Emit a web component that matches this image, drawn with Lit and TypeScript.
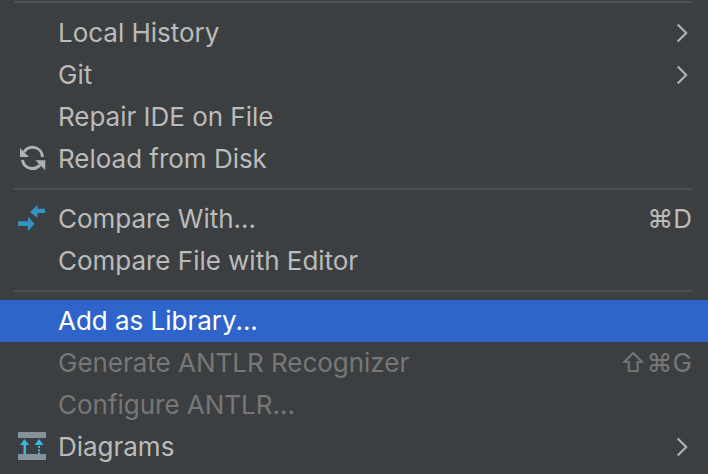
import {LitElement, css, html, svg} from 'lit';
import {customElement} from 'lit/decorators.js';

type Item = {
  label: string;
  icon?: 'reload' | 'compare' | 'diagrams';
  shortcut?: string;
  submenu?: boolean;
  disabled?: boolean;
  selected?: boolean;
};

const groups: Item[][] = [
  [
    {label: 'Local History', submenu: true},
    {label: 'Git', submenu: true},
    {label: 'Repair IDE on File'},
    {label: 'Reload from Disk', icon: 'reload'},
  ],
  [
    {label: 'Compare With...', icon: 'compare', shortcut: '⌘D'},
    {label: 'Compare File with Editor'},
  ],
  [
    {label: 'Add as Library...', selected: true},
    {label: 'Generate ANTLR Recognizer', disabled: true, shortcut: '⇧⌘G'},
    {label: 'Configure ANTLR...', disabled: true},
    {label: 'Diagrams', icon: 'diagrams', submenu: true},
  ],
];

const icons = {
  reload: svg`
    <path d="M24.500 13A10 10 0 0 0 6 8M4.500 16A10 10 0 0 0 22 21" fill="none" stroke="#afb1b3" stroke-width="3"/>
    <path d="M2 4v9h9zM17.300 16.300h10v10z" fill="#afb1b3"/>`,
  compare: svg`
    <path d="M19.500 .7V14L12 8zM19.500 4.700H27V9H19.500z" fill="#3592c4"/>
    <path d="M10 12.700V27.300L16.500 19.700zM0 17.300H10V22H0z" fill="#3592c4"/>`,
  diagrams: svg`
    <path d="M0 0h28v6H0zM0 22h28v6H0z" fill="#87939a"/>
    <path d="M6.500 7l4.500 6H8v9H5.500v-9H2zM21 7l4.500 6H16.500z" fill="#3db7e0"/>
    <path d="M20 14h2v2h-2zM20 17.500h2v2h-2zM20 20.500h2v1.500h-2z" fill="#3db7e0"/>`,
};

@customElement('app-root')
export class AppRoot extends LitElement {
  static styles = css`
    :host {
      display: block;
      height: 474px;
      overflow: hidden;
      background: #3c3f41;
      font-family: Inter, 'Noto Sans', sans-serif;
      font-size: 26px;
      letter-spacing: -0.02px;
      color: #bbbbbb;
    }

    .sep {
      height: 2px;
      margin: 8px 16px 8px 14px;
      background: #51504f;
    }

    .sep.top {
      margin-top: 1px;
      margin-bottom: 9px;
    }

    .row {
      display: flex;
      align-items: center;
      height: 42px;
      padding: 0 16px 0 14px;
      white-space: nowrap;
    }

    .row.selected {
      background: #2f65ca;
      color: #ffffff;
    }

    .row.disabled {
      color: #777777;
    }

    .icon {
      flex: none;
      width: 28px;
      height: 28px;
      margin: 0 12px 2px 4px;
      overflow: visible;
    }

    .icon-blank {
      flex: none;
      width: 44px;
    }

    .label {
      flex: 1;
      margin-top: -1px;
    }

    .shortcut {
      font-family: Inter, 'DejaVu Sans', sans-serif;
      font-size: 26px;
      margin-top: -1px;
    }

    .chevron {
      flex: none;
      width: 12px;
      height: 20px;
      margin-right: 4px;
    }
  `;

  private renderRow(item: Item) {
    const cls = `row${item.selected ? ' selected' : ''}${item.disabled ? ' disabled' : ''}`;
    return html`
      <div class=${cls}>
        ${item.icon
          ? html`<svg class="icon" viewBox="0 0 28 28">${icons[item.icon]}</svg>`
          : html`<span class="icon-blank"></span>`}
        <span class="label">${item.label}</span>
        ${item.shortcut ? html`<span class="shortcut">${item.shortcut}</span>` : ''}
        ${item.submenu
          ? html`<svg class="chevron" viewBox="0 0 12 20">
              <path d="M1.700 1.500l8.500 8.500-8.500 8.500" fill="none" stroke="#afb1b3" stroke-width="2.200"/>
            </svg>`
          : ''}
      </div>
    `;
  }

  render() {
    return html`
      <div class="sep top"></div>
      ${groups.map(
        (group, i) => html`
          ${i > 0 ? html`<div class="sep"></div>` : ''}
          ${group.map((item) => this.renderRow(item))}
        `,
      )}
    `;
  }
}
